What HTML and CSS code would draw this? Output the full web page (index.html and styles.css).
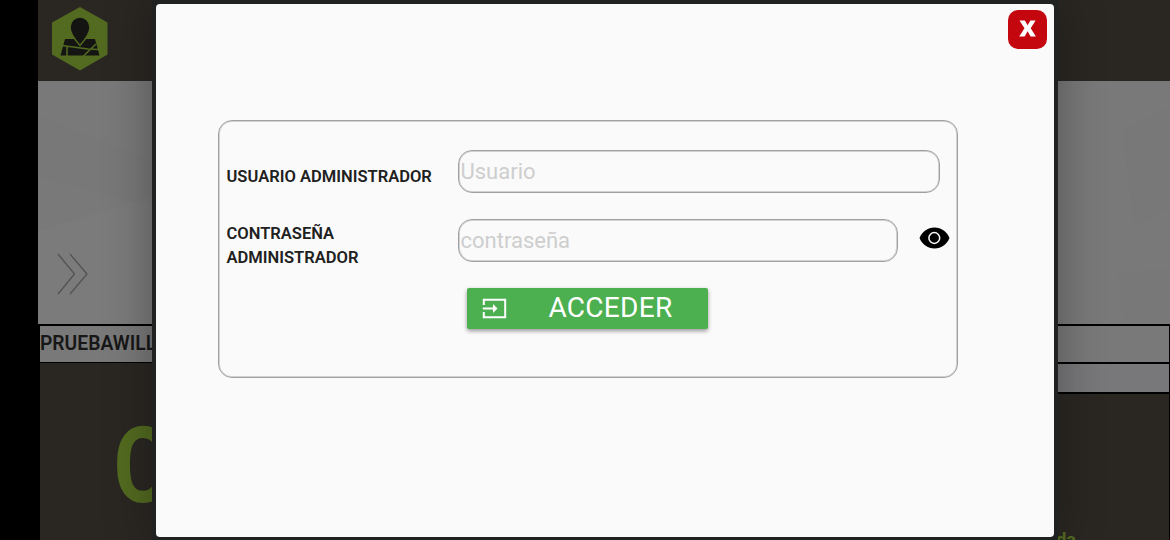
FILE: index.html
```html
<!DOCTYPE html>
<html lang="es">
<head>
<meta charset="utf-8">
<title>Acceso administrador</title>
<link rel="stylesheet" href="styles.css">
</head>
<body>
<div class="page">
  <header class="header">
    <svg class="logo" width="56" height="64" viewBox="0 0 56 64">
      <path fill="#536b20" d="M28 0 55.500 15.500v32L28 63.500.0 47.500v-32z"/>
      <path fill="#141512" d="M13 32h30L47.500 48.500H8.500z"/>
      <path fill="none" stroke="#536b20" stroke-width="1.500" d="M10 38.500l26 3.500L47 42.500M15 39v10M31 49.500l13-12.500"/>
      <path fill="#141512" stroke="#536b20" stroke-width="1.500" d="M28 38.500C24 34 18 27.500 18 20a10 10 0 0 1 20 0C38 27.500 32 34 28 38.500z"/>
    </svg>
  </header>
  <section class="hero">
    <svg class="facets" viewBox="0 0 1132 243" preserveAspectRatio="none">
      <path fill="#6f6f6f" fill-opacity=".15" d="M0 35l114 45v45L0 95zM1084 50l48-24v100l-35 20zM1079 192l53-4v55h-45z"/>
      <path fill="#858585" fill-opacity=".15" d="M0 150l114-35v128H0z"/>
    </svg>
    <svg class="chevrons" width="32" height="43" viewBox="0 0 32 43">
      <path fill="none" stroke="#525252" stroke-width="1.300" d="M1 1l16.500 20L1 41M13 1l17 20L13 41"/>
    </svg>
  </section>
  <div class="row row-name">PRUEBAWILL</div>
  <div class="row row-empty"></div>
  <section class="content">
    <div class="headline">C</div>
    <div class="tail">da</div>
  </section>
</div>
<div class="modal">
  <div class="sheet">
    <div class="topbar"><button class="close" aria-label="Cerrar"><svg width="17" height="17" viewBox="0 0 17 17"><path fill="#fff" d="M.5.5h5.300l2.800 4.800L11.400.5h5.200L11.700 8.300l5.200 8.200h-5.300L8.600 11.300l-3 5.200H.2l5.300-8.200z"/></svg></button></div>
    <form class="panel">
      <div class="field">
        <label class="label" for="user">USUARIO ADMINISTRADOR</label>
        <input class="input input-user" id="user" placeholder="Usuario">
      </div>
      <div class="field field-pass">
        <label class="label label-pass" for="pass">CONTRASEÑA ADMINISTRADOR</label>
        <input class="input input-pass" id="pass" placeholder="contraseña">
        <svg class="eye" width="31" height="22" viewBox="0 0 31 22">
          <path fill="#000" d="M.5 11C3 5 8.500.5 15.500.5S28 5 30.500 11C28 17 22.500 21.500 15.500 21.500S3 17 .5 11z"/>
          <circle cx="15.300" cy="11" r="5.400" fill="none" stroke="#fafafa" stroke-width="1.500"/>
        </svg>
      </div>
      <button class="submit" type="button">
        <svg class="enter" width="25" height="21" viewBox="0 0 25 21">
          <path fill="none" stroke="#fff" stroke-width="2" d="M1.800 7V1.800H23.200V19.200H1.800V14M.8 10.500H14"/>
          <path fill="#fff" d="M11 6l4.500 4.500L11 15z"/>
        </svg>
        <span class="submit-text">ACCEDER</span>
      </button>
    </form>
  </div>
</div>
</body>
</html>
```
FILE: styles.css
```css
* { box-sizing: border-box; }
body {
  margin: 0;
  width: 1170px;
  height: 540px;
  overflow: hidden;
  background: #000;
  font-family: Roboto, sans-serif;
}
.page {
  height: 540px;
  padding-left: 38px;
  display: flex;
  flex-direction: column;
  overflow: hidden;
}
.header {
  height: 81px;
  flex: none;
  padding: 7px 0 0 14px;
  background: #2a2723;
}
.logo { display: block; }
.hero {
  height: 243px;
  flex: none;
  background: #797979;
  display: grid;
}
.facets { grid-area: 1 / 1; width: 100%; height: 243px; }
.chevrons { grid-area: 1 / 1; margin: 172px 0 0 19px; }
.row {
  flex: none;
  margin-left: 2px;
  background: #797979;
  border-top: 2px solid #000;
  border-right: 1px solid #000;
  box-shadow: -2px 0 #000;
}
.row-name {
  height: 38px;
  font-size: 19.300px;
  font-weight: 600;
  line-height: 36px;
  color: #171717;
}
.row-empty { height: 32px; border-bottom: 2px solid #000; background: #78787a; clip-path: inset(0 0 0 116px); }
.content {
  flex: none;
  height: 179px;
  margin: -32px 1px 0 2px;
  background: linear-gradient(#2a2723, #2a2723) 0 0 / 200px 100% no-repeat, linear-gradient(#2a2723, #2a2723) 0 31px / 100% 100% no-repeat;
  border-top: 1px solid #000;
  display: flex;
  justify-content: space-between;
}
.headline {
  padding: 47px 0 0 73px;
  font-size: 106px;
  line-height: 112px;
  font-weight: 700;
  color: #536b20;
  transform: scaleX(.82);
  transform-origin: 76px 0;
}
.tail {
  padding: 167px 93px 0 0;
  font-size: 18px;
  line-height: 20px;
  font-weight: 700;
  color: #536b20;
}
.modal {
  position: absolute;
  left: 152px;
  top: 0;
  width: 906px;
  height: 540px;
  padding: 4px 4px 3.500px 3.500px;
  background: #202121;
  box-shadow: 0 0 45px rgba(0, 0, 0, .32);
}
.sheet {
  height: 100%;
  border-radius: 4px;
  background: #fafafa;
}
.topbar {
  height: 116px;
  padding: 5.500px 7.500px 0 0;
  display: flex;
  justify-content: flex-end;
}
.close {
  width: 39px;
  height: 39px;
  padding: 0 0 1px;
  border: 0;
  border-radius: 10px;
  background: #c4060f;
  display: flex;
  align-items: center;
  justify-content: center;
}
.panel {
  width: 740px;
  height: 258px;
  margin-left: 62px;
  padding: 29px 8px 0 8px;
  border: 1px solid #a0a0a0;
  border-radius: 14px;
  box-shadow: inset 0 0 0 1px #d2d2d2;
}
.field { display: flex; height: 43px; }
.field-pass { margin-top: 26px; }
.label {
  width: 231px;
  flex: none;
  padding-top: 15px;
  font-size: 16.550px;
  line-height: 24.300px;
  font-weight: 600;
  color: #202020;
  white-space: nowrap;
}
.label-pass { padding: 3px 60px 0 0; white-space: normal; }
.input {
  flex: none;
  height: 43px;
  padding: 0 2px;
  border: 1px solid #a0a0a0;
  border-radius: 14px;
  box-shadow: inset 0 0 0 1px #d2d2d2;
  background: transparent;
  outline: 0;
  font: 22px Roboto, sans-serif;
}
.input::placeholder { color: #cecece; opacity: 1; }
.input-user { width: 482px; }
.input-pass { width: 440px; }
.eye { margin: 8px 0 0 21px; flex: none; }
.submit {
  width: 241px;
  height: 41px;
  margin: 26px 0 0 240.400px;
  padding: 0 0 0 15px;
  border: 0;
  border-radius: 2px;
  background: #4caf50;
  box-shadow: 0 2px 4px rgba(0, 0, 0, .4);
  color: #fff;
  display: flex;
  align-items: center;
}
.submit-text {
  margin: -2px 0 0 41.500px;
  font: 28px/41px Roboto, sans-serif;
  letter-spacing: .3px;
}
```
